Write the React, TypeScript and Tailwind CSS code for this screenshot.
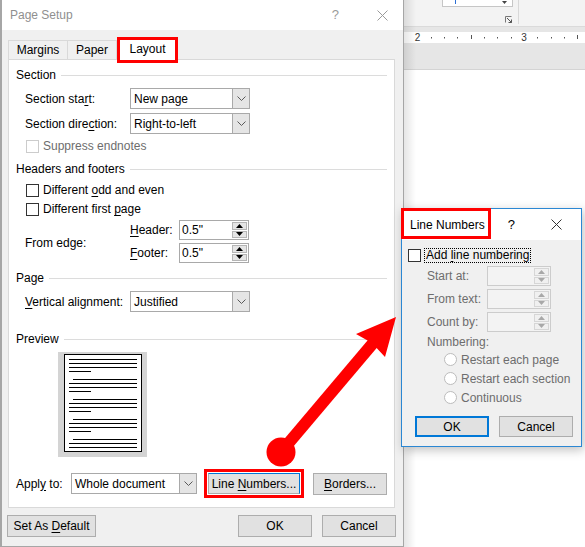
import React from 'react';

function Chevron() {
  return (
    <svg width="9" height="5" viewBox="0 0 9 5">
      <path d="M0.5 0.5L4.5 4.5L8.5 0.5" fill="none" stroke="#5a5a5a" strokeWidth="1" />
    </svg>
  );
}

function Close({ color }: { color: string }) {
  return (
    <svg width="11" height="11" viewBox="0 0 11 11">
      <path d="M0.5 0.5L10.5 10.5M10.5 0.5L0.5 10.5" stroke={color} strokeWidth="1" />
    </svg>
  );
}

function Select({ value, className }: { value: string; className: string }) {
  return (
    <div className={`flex h-[21px] border border-[#a9a9a9] bg-white ${className}`}>
      <div className="flex flex-1 items-center pl-[3px] text-black">{value}</div>
      <div className="flex w-[17px] items-center justify-center border-l border-[#a9a9a9] bg-[#e5e5e5]">
        <Chevron />
      </div>
    </div>
  );
}

function Spin({ value, disabled }: { value?: string; disabled?: boolean }) {
  const arrow = disabled ? '#a8a8a8' : '#000000';
  return (
    <div
      className={`flex h-[20px] border ${
        disabled ? 'w-[64px] border-[#cccccc] bg-[#f3f3f3]' : 'w-[70px] border-[#a9a9a9] bg-white'
      }`}
    >
      <div className="flex flex-1 items-center pl-[2px] text-black">{value}</div>
      <div className="my-px mr-px flex w-[15px] flex-col gap-px">
        <div
          className={`flex flex-1 items-center justify-center border ${
            disabled ? 'border-[#d6d6d6] bg-[#f0f0f0]' : 'border-[#b5b5b5] bg-[#e5e5e5]'
          }`}
        >
          <svg width="7" height="4" viewBox="0 0 7 4">
            <path d="M3.5 0L7 4H0Z" fill={arrow} />
          </svg>
        </div>
        <div
          className={`flex flex-1 items-center justify-center border ${
            disabled ? 'border-[#d6d6d6] bg-[#f0f0f0]' : 'border-[#b5b5b5] bg-[#e5e5e5]'
          }`}
        >
          <svg width="7" height="4" viewBox="0 0 7 4">
            <path d="M0 0H7L3.5 4Z" fill={arrow} />
          </svg>
        </div>
      </div>
    </div>
  );
}

function Check({ disabled }: { disabled?: boolean }) {
  return (
    <div
      className={`h-[13px] w-[13px] shrink-0 border bg-white ${
        disabled ? 'border-[#cccccc]' : 'border-[#333333]'
      }`}
    />
  );
}

function Group({ title }: { title: string }) {
  return (
    <div className="flex h-[18px] items-center px-[7px]">
      <span>{title}</span>
      <div className="ml-[5px] h-px flex-1 bg-[#dcdcdc]" />
    </div>
  );
}

function Btn({ children, className }: { children: React.ReactNode; className: string }) {
  return (
    <div className={`flex items-center justify-center border bg-[#e1e1e1] text-black ${className}`}>
      <span>{children}</span>
    </div>
  );
}

function U({ children }: { children: React.ReactNode }) {
  return <span className="underline underline-offset-2">{children}</span>;
}

function PreviewPage() {
  const lines: React.ReactNode[] = [];
  for (let g = 0; g < 5; g++) {
    const y = 5 + g * 20;
    lines.push(<line key={`a${g}`} x1={g === 0 ? 5 : 9} x2={73} y1={y + 0.5} y2={y + 0.5} />);
    lines.push(<line key={`b${g}`} x1={5} x2={73} y1={y + 4.5} y2={y + 4.5} />);
    lines.push(<line key={`c${g}`} x1={5} x2={73} y1={y + 8.5} y2={y + 8.5} />);
    if (g < 4) lines.push(<line key={`d${g}`} x1={5} x2={27} y1={y + 12.5} y2={y + 12.5} />);
  }
  return (
    <div className="ml-[49px] mt-[4px] flex h-[105px] w-[89px] justify-center bg-[#d4d4d4] pt-[2px]">
      <svg width="78" height="98" viewBox="0 0 78 98">
        <rect x="0.5" y="0.5" width="77" height="97" fill="#ffffff" stroke="#000000" />
        <g stroke="#000000" strokeWidth="1">{lines}</g>
      </svg>
    </div>
  );
}

function Ruler() {
  const ticks: React.ReactNode[] = [];
  for (let k = 1; k < 13; k++) {
    if (k === 8) continue;
    const x = Math.round(13.5 + k * 13.3);
    const long = k === 4 || k === 12;
    ticks.push(<rect key={k} x={x} y={long ? 3 : 5} width="1" height={long ? 4 : 1.5} fill="#555555" />);
  }
  return (
    <svg width="181" height="11" viewBox="0 0 181 11">
      {ticks}
      <text x="13.5" y="9" textAnchor="middle" fontSize="10" fill="#333333">
        2
      </text>
      <text x="120" y="9" textAnchor="middle" fontSize="10" fill="#333333">
        3
      </text>
    </svg>
  );
}

export default function App() {
  return (
    <div className="relative flex h-[547px] w-[585px] overflow-hidden bg-white font-['Liberation_Sans',Arial,sans-serif] text-[12px] leading-[16px] text-black">
      {/* Page Setup dialog */}
      <div className="flex h-[547px] w-[404px] shrink-0 flex-col border-b border-l-2 border-r border-[#a6a6a6] bg-[#f0f0f0]">
        <div className="flex h-[30px] shrink-0 items-center bg-white pl-[8px] text-[#8f8f8f]">
          <span>Page Setup</span>
          <span className="ml-auto text-[13px] text-[#9a9a9a]">?</span>
          <div className="ml-[38px] mr-[15px]">
            <Close color="#9a9a9a" />
          </div>
        </div>

        {/* Tabs */}
        <div className="flex h-[29px] shrink-0 items-end pl-[6px]">
          <div className="flex h-[19px] w-[59px] items-center justify-center border-l border-t border-[#d9d9d9]">
            Margins
          </div>
          <div className="flex h-[19px] w-[50px] items-center justify-center border-l border-r border-t border-[#d9d9d9]">
            Paper
          </div>
          <div className="relative z-10 -mb-[4px] flex h-[26px] w-[61px] items-center justify-center border-[3px] border-[#ff0000] bg-white pb-[2px]">
            Layout
          </div>
        </div>

        {/* Panel */}
        <div className="ml-[6px] flex h-[449px] w-[387px] shrink-0 flex-col border border-[#d9d9d9] bg-white">
          <div className="mt-[6px]">
            <Group title="Section" />
          </div>
          <div className="mt-[4px] flex h-[21px] items-center pl-[16px]">
            <span className="w-[105px]">
              Section sta<U>r</U>t:
            </span>
            <Select value="New page" className="w-[120px]" />
          </div>
          <div className="mt-[4px] flex h-[21px] items-center pl-[16px]">
            <span className="w-[105px]">
              Section dire<U>c</U>tion:
            </span>
            <Select value="Right-to-left" className="w-[120px]" />
          </div>
          <div className="mt-[4px] flex h-[16px] items-center gap-[4px] pl-[17px] text-[#6d6d6d]">
            <Check disabled />
            <span>Suppress endnotes</span>
          </div>

          <div className="mt-[6px]">
            <Group title="Headers and footers" />
          </div>
          <div className="mt-[4px] flex h-[16px] items-center gap-[4px] pl-[17px]">
            <Check />
            <span>
              Different <U>o</U>dd and even
            </span>
          </div>
          <div className="mt-[3px] flex h-[16px] items-center gap-[4px] pl-[17px]">
            <Check />
            <span>
              Different first <U>p</U>age
            </span>
          </div>
          <div className="mt-[3px] flex h-[43px] items-center pl-[16px]">
            <span className="w-[105px] pt-[3px]">From edge:</span>
            <div className="flex flex-col gap-[3px]">
              <div className="flex items-center">
                <span className="w-[49px]">
                  <U>H</U>eader:
                </span>
                <Spin value={'0.5"'} />
              </div>
              <div className="flex items-center">
                <span className="w-[49px]">
                  <U>F</U>ooter:
                </span>
                <Spin value={'0.5"'} />
              </div>
            </div>
          </div>

          <div className="mt-[6px]">
            <Group title="Page" />
          </div>
          <div className="mt-[4px] flex h-[21px] items-center pl-[16px]">
            <span className="w-[105px]">
              <U>V</U>ertical alignment:
            </span>
            <Select value="Justified" className="w-[120px]" />
          </div>

          <div className="mt-[18px]">
            <Group title="Preview" />
          </div>
          <PreviewPage />

          <div className="mt-[12px] flex h-[29px] items-center pl-[7px]">
            <span className="w-[55px]">
              Appl<U>y</U> to:
            </span>
            <Select value="Whole document" className="w-[126px]" />
            <div className="ml-[7px] border-[3px] border-[#ff0000] p-px">
              <Btn className="h-[21px] w-[92px] border-[#adadad] border-t-[#0078d7] border-r-[#0078d7]">
                Line <U>N</U>umbers...
              </Btn>
            </div>
            <Btn className="ml-[9px] h-[22px] w-[74px] border-[#adadad]">
              <U>B</U>orders...
            </Btn>
          </div>
        </div>

        {/* Bottom buttons */}
        <div className="mt-[7px] flex">
          <Btn className="ml-[5px] h-[22px] w-[89px] border-[#adadad]">
            Set As <U>D</U>efault
          </Btn>
          <Btn className="ml-auto h-[22px] w-[74px] border-[#adadad]">OK</Btn>
          <Btn className="ml-[10px] mr-[7px] h-[22px] w-[74px] border-[#adadad]">Cancel</Btn>
        </div>
      </div>

      {/* Word background */}
      <div className="relative flex flex-1 flex-col">
        <div className="flex h-[27px] shrink-0 border-b border-[#dadada] bg-[#f3f3f3]">
          <div className="ml-[38px] flex w-[71px] flex-col">
            <div className="flex h-[7px] items-start border-x border-b border-[#c6c6c6] bg-white">
              <div className="ml-[12px] h-[4px] w-px bg-[#2b6fd6]" />
              <svg className="ml-auto mr-[5px] mt-px" width="5" height="3" viewBox="0 0 5 3">
                <path d="M0 0H5L2.5 3Z" fill="#444444" />
              </svg>
            </div>
            <svg className="mr-[1px] mt-[9px] self-end" width="7" height="7" viewBox="0 0 7 7">
              <path d="M0.5 6.5V0.5H6.5" fill="none" stroke="#777777" />
              <path d="M2 2L6.5 6.5M3.5 6.5H6.5V3.5" fill="none" stroke="#555555" />
            </svg>
          </div>
          <div className="ml-[5px] h-[24px] w-px bg-[#d8d8d8]" />
        </div>
        <div className="h-[5px] shrink-0 bg-[#e6e6e6]" />
        <div className="h-[11px] shrink-0 bg-white">
          <Ruler />
        </div>
        <div className="h-[27px] shrink-0 border-b border-[#d4d4d4] bg-[#e6e6e6]" />
        <div className="flex-1 bg-white" />
        <div className="pointer-events-none absolute inset-y-0 left-0 w-[12px] bg-gradient-to-r from-black/10 to-transparent" />
      </div>

      {/* Line Numbers dialog */}
      <div className="absolute left-[401px] top-[208px] z-10 flex h-[239px] w-[181px] flex-col border border-[#2b87d3] bg-[#f0f0f0] shadow-[2px_3px_10px_rgba(0,0,0,0.25)]">
        <div className="relative flex h-[31px] shrink-0 items-center bg-white">
          <span className="pl-[8px]">Line Numbers</span>
          <span className="ml-auto text-[13px]">?</span>
          <div className="ml-[36px] mr-[19px]">
            <Close color="#333333" />
          </div>
          <div className="absolute -left-px -top-px h-[31px] w-[90px] border-[3px] border-[#ff0000]" />
        </div>
        <div className="mt-[7px] flex h-[16px] items-center pl-[6px]">
          <Check />
          <span className="ml-[3px] border border-dotted border-black px-px leading-[13px]">
            Add <U>l</U>ine numbering
          </span>
        </div>
        <div className="mt-[3px] flex h-[20px] items-center pl-[25px] text-[#6d6d6d]">
          <span className="w-[60px]">Start at:</span>
          <Spin disabled />
        </div>
        <div className="mt-[3px] flex h-[20px] items-center pl-[25px] text-[#6d6d6d]">
          <span className="w-[60px]">From text:</span>
          <Spin disabled />
        </div>
        <div className="mt-[3px] flex h-[20px] items-center pl-[25px] text-[#6d6d6d]">
          <span className="w-[60px]">Count by:</span>
          <Spin disabled />
        </div>
        <div className="mt-[2px] flex h-[16px] items-center pl-[25px] text-[#6d6d6d]">Numbering:</div>
        {['Restart each page', 'Restart each section', 'Continuous'].map((t) => (
          <div key={t} className="flex h-[19px] items-center gap-[4px] pl-[42px] text-[#6d6d6d]">
            <div className="h-[13px] w-[13px] rounded-full border border-[#bcbcbc] bg-white" />
            <span>{t}</span>
          </div>
        ))}
        <div className="mt-[9px] flex">
          <Btn className="ml-[13px] h-[21px] w-[74px] border-2 border-[#0078d7]">OK</Btn>
          <Btn className="ml-[10px] h-[21px] w-[74px] border-[#adadad]">Cancel</Btn>
        </div>
      </div>

      {/* Red arrow annotation */}
      <svg className="pointer-events-none absolute left-0 top-0 z-20" width="585" height="547" viewBox="0 0 585 547">
        <line x1="281" y1="452" x2="374" y2="342" stroke="#ff0000" strokeWidth="12" />
        <circle cx="281" cy="452" r="14.5" fill="#ff0000" />
        <polygon points="396,317 356,334 372,343 385,357" fill="#ff0000" />
      </svg>
    </div>
  );
}
